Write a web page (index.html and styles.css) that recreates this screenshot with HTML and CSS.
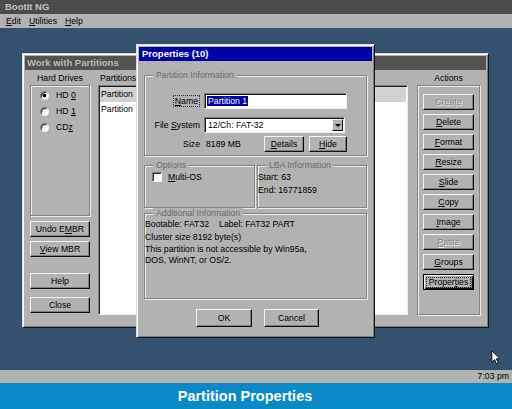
FILE: index.html
```html
<!DOCTYPE html>
<html lang="en">
<head>
    <meta charset="UTF-8">
    <title>BootIt NG - Partition Properties</title>
    <link rel="stylesheet" href="styles.css">
</head>
<body>
<div class="screen">
    <div class="app-title">BootIt NG</div>
    <div class="menubar">
        <span><u>E</u>dit</span>
        <span><u>U</u>tilities</span>
        <span><u>H</u>elp</span>
    </div>

    <div class="desktop">
        <!-- Main window -->
        <div class="win main-win">
            <div class="caption inactive">Work with Partitions</div>
            <div class="main-body">
                <div class="col col-drives">
                    <div class="col-head">Hard Drives</div>
                    <div class="etched drives-box">
                        <div class="radio checked"><span class="dot"></span><span>HD <u>0</u></span></div>
                        <div class="radio"><span class="dot"></span><span>HD <u>1</u></span></div>
                        <div class="radio"><span class="dot"></span><span>CD<u>z</u></span></div>
                    </div>
                    <div class="btn first">Undo E<u>M</u>BR</div>
                    <div class="btn"><u>V</u>iew MBR</div>
                    <div class="btn gap-big">Help</div>
                    <div class="btn gap-mid">Close</div>
                </div>
                <div class="col col-parts">
                    <div class="col-head left">Partitions</div>
                    <div class="listbox">
                        <div class="row sel">Partition</div>
                        <div class="row">Partition</div>
                    </div>
                </div>
                <div class="col col-actions">
                    <div class="col-head">Actions</div>
                    <div class="etched actions-box">
                        <div class="btn disabled">Crea<u>t</u>e</div>
                        <div class="btn"><u>D</u>elete</div>
                        <div class="btn"><u>F</u>ormat</div>
                        <div class="btn"><u>R</u>esize</div>
                        <div class="btn"><u>S</u>lide</div>
                        <div class="btn"><u>C</u>opy</div>
                        <div class="btn"><u>I</u>mage</div>
                        <div class="btn disabled"><u>P</u>aste</div>
                        <div class="btn"><u>G</u>roups</div>
                        <div class="btn focus"><span class="focus-rect">Proper<u>t</u>ies</span></div>
                    </div>
                </div>
            </div>
        </div>

        <!-- Properties dialog -->
        <div class="win dialog">
            <div class="caption active">Properties (10)</div>
            <div class="dlg-body">
                <fieldset class="group pi-group">
                    <legend>Partition Information</legend>
                    <div class="field-row name-row">
                        <span class="field-label"><span class="focus-label"><u>N</u>ame</span></span>
                        <div class="textbox name-box"><span class="selected-text">Partition 1</span></div>
                    </div>
                    <div class="field-row fs-row">
                        <span class="field-label">File <u>S</u>ystem</span>
                        <div class="textbox combo">
                            <span class="combo-text">12/Ch: FAT-32</span>
                            <span class="combo-arrow"></span>
                        </div>
                    </div>
                    <div class="field-row size-row">
                        <span class="field-label">Size</span>
                        <div class="size-field">
                            <span class="size-value">8189 MB</span>
                            <div class="btn details-btn"><u>D</u>etails</div>
                            <div class="btn hide-btn"><u>H</u>ide</div>
                        </div>
                    </div>
                </fieldset>

                <div class="group-pair">
                    <fieldset class="group options-group">
                        <legend>Options</legend>
                        <div class="check-row"><span class="checkbox"></span><span><u>M</u>ulti-OS</span></div>
                    </fieldset>
                    <fieldset class="group lba-group">
                        <legend>LBA Information</legend>
                        <div class="lba-line">Start: 63</div>
                        <div class="lba-line">End: 16771859</div>
                    </fieldset>
                </div>

                <fieldset class="group info-group">
                    <legend>Additional Information</legend>
                    <div class="info-line">Bootable: FAT32<span class="info-label">Label: FAT32 PART</span></div>
                    <div class="info-line cluster">Cluster size 8192 byte(s)</div>
                    <p class="info-note">This partition is not accessible by Win95a,<br>DOS, WinNT, or OS/2.</p>
                </fieldset>

                <div class="dlg-buttons">
                    <div class="btn ok-btn">OK</div>
                    <div class="btn cancel-btn">Cancel</div>
                </div>
            </div>
        </div>

        <svg class="cursor" width="10" height="15" viewBox="0 0 12 18">
            <path d="M1 1 L1 14.5 L4.3 11.4 L6.6 16.6 L8.6 15.7 L6.4 10.6 L10.8 10.6 Z" fill="#fff" stroke="#000" stroke-width="1" stroke-linejoin="miter"/>
        </svg>
    </div>

    <div class="statusbar">7:03 pm</div>
    <div class="banner">Partition Properties</div>
</div>
</body>
</html>
```

FILE: styles.css
```css
* {
    box-sizing: border-box;
}

body {
    margin: 0;
    font-family: "Liberation Sans", Arial, sans-serif;
    font-size: 8.7px;
    color: #000;
    background-color: #36516e;
}

u {
    text-decoration-thickness: 1px;
    text-underline-offset: 1px;
}

.screen {
    width: 512px;
    height: 409px;
    display: flex;
    flex-direction: column;
    overflow: hidden;
}

/* Top bars */
.app-title {
    height: 14px;
    line-height: 14px;
    padding-left: 5px;
    background-color: #4b4b4b;
    color: #c2c2c2;
    font-weight: bold;
    font-size: 9.5px;
}

.menubar {
    height: 14px;
    line-height: 14px;
    display: flex;
    padding-left: 2px;
    background-color: #b2b2b2;
}

.menubar span {
    padding: 0 4px;
}

/* Desktop */
.desktop {
    position: relative;
    height: 342px;
    background-color: #36516e;
}

.statusbar {
    height: 13px;
    line-height: 13px;
    padding-right: 3px;
    text-align: right;
    background-color: #b2b2b2;
}

.banner {
    flex: 1;
    line-height: 26px;
    padding-right: 22px;
    text-align: center;
    background-color: #0889c8;
    color: #fff;
    font-weight: bold;
    font-size: 14.5px;
}

/* Windows */
.win {
    position: absolute;
    display: flex;
    flex-direction: column;
    padding: 2px;
    background-color: #b2b2b2;
    border: 1px solid;
    border-color: #dcdcdc #141414 #141414 #dcdcdc;
    box-shadow: inset 1px 1px #fff, inset -1px -1px #7c7c7c;
}

.main-win {
    left: 22px;
    top: 25px;
    width: 467px;
    height: 275px;
}

.dialog {
    left: 136px;
    top: 16px;
    width: 239px;
    height: 294px;
}

.caption {
    height: 14px;
    line-height: 14px;
    padding-left: 2px;
    font-weight: bold;
    font-size: 9.5px;
}

.caption.inactive {
    background-color: #525252;
    color: #bababa;
}

.caption.active {
    padding-left: 3px;
    background-color: #0000a8;
    color: #fff;
}

/* Buttons */
.btn {
    height: 16px;
    line-height: 14px;
    text-align: center;
    white-space: nowrap;
    background-color: #b2b2b2;
    border: 1px solid;
    border-color: #f2f2f2 #101010 #101010 #f2f2f2;
    box-shadow: inset -1px -1px #7e7e7e;
}

.btn.disabled {
    color: #858585;
    text-shadow: 1px 1px #ececec;
}

.btn.focus {
    padding: 1px;
    border-color: #000;
    box-shadow: inset 1px 1px #f2f2f2, inset -1px -1px #101010, inset -2px -2px #7e7e7e;
}

.focus-rect {
    display: block;
    margin: 1px 1px 0;
    line-height: 9px;
    border: 1px dotted #222;
}

/* Etched frames */
.etched {
    border: 1px solid #858585;
    box-shadow: inset 1px 1px #ebebeb, 1px 1px #ebebeb;
}

/* Main window body */
.main-body {
    display: flex;
    padding: 1px 0 0 5px;
}

.col {
    display: flex;
    flex-direction: column;
}

.col-head {
    height: 14px;
    line-height: 14px;
    text-align: center;
}

.col-head.left {
    text-align: left;
    padding-left: 2px;
}

.col-drives {
    width: 60px;
}

.col-parts {
    width: 310px;
    margin-left: 8px;
}

.col-actions {
    width: 63px;
    margin-left: 9px;
}

.drives-box {
    height: 131px;
    padding: 1px 0 0 9px;
}

.radio {
    display: flex;
    align-items: center;
    height: 16px;
}

.dot {
    width: 9px;
    height: 9px;
    margin-right: 7px;
    border-radius: 50%;
    background-color: #fff;
    border: 1px solid;
    border-color: #7a7a7a #f2f2f2 #f2f2f2 #7a7a7a;
    box-shadow: inset 1px 1px #303030;
}

.radio.checked .dot {
    background: radial-gradient(circle, #000 0, #000 1.6px, #fff 2.2px);
}

.col-drives .btn.first {
    margin-top: 5px;
}

.col-drives .btn {
    margin-top: 4px;
}

.col-drives .btn.gap-big {
    margin-top: 16px;
}

.col-drives .btn.gap-mid {
    margin-top: 8px;
}

.listbox {
    height: 230px;
    padding: 1px;
    background-color: #fff;
    border: 1px solid;
    border-color: #7a7a7a #efefef #efefef #7a7a7a;
    box-shadow: inset 1px 1px #202020;
}

.listbox .row {
    height: 15px;
    line-height: 15px;
    padding-left: 1px;
}

.listbox .row.sel {
    background-color: #d2d2d2;
}

.actions-box {
    height: 230px;
    display: flex;
    flex-direction: column;
    gap: 4px;
    padding: 8px 0 0 5px;
}

.actions-box .btn {
    width: 51px;
}

/* Dialog body */
.dlg-body {
    display: flex;
    flex-direction: column;
    padding: 9px 5px 0;
}

fieldset.group {
    margin: 0;
    padding: 0;
    min-width: 0;
    border: 1px solid #858585;
    box-shadow: inset 1px 1px #ebebeb, 1px 1px #ebebeb;
}

fieldset.group legend {
    margin-left: 8px;
    padding: 0 3px;
    line-height: 11px;
    color: #6c6c6c;
    background-color: #b2b2b2;
}

.pi-group {
    height: 86px;
}

.field-row {
    display: flex;
    align-items: center;
    height: 16px;
}

.name-row {
    margin-top: 12px;
}

.fs-row {
    margin-top: 8px;
}

.size-row {
    margin-top: 3px;
}

.field-label {
    width: 55px;
    margin-right: 4px;
    text-align: right;
    white-space: nowrap;
}

.focus-label {
    padding: 0 1px;
    border: 1px dotted #333;
}

.textbox {
    height: 16px;
    line-height: 14px;
    padding-left: 2px;
    background-color: #fff;
    border: 1px solid;
    border-color: #7a7a7a #f2f2f2 #f2f2f2 #7a7a7a;
    box-shadow: inset 1px 1px #1a1a1a;
}

.name-box {
    width: 143px;
}

.selected-text {
    padding: 0 1px;
    background-color: #0000a8;
    color: #fff;
}

.combo {
    width: 141px;
    display: flex;
    align-items: center;
    justify-content: space-between;
    padding-right: 1px;
}

.combo-text {
    padding-left: 1px;
}

.combo-arrow {
    width: 11px;
    height: 12px;
    display: flex;
    align-items: center;
    justify-content: center;
    background-color: #b2b2b2;
    border: 1px solid;
    border-color: #f2f2f2 #101010 #101010 #f2f2f2;
}

.combo-arrow::after {
    content: "";
    border-left: 3px solid transparent;
    border-right: 3px solid transparent;
    border-top: 3px solid #000;
}

.size-field {
    width: 143px;
    display: flex;
    align-items: center;
}

.size-value {
    padding-left: 2px;
}

.details-btn {
    width: 40px;
    margin-left: auto;
}

.hide-btn {
    width: 38px;
    margin-left: 5px;
}

.group-pair {
    display: flex;
    gap: 2px;
    margin-top: 4px;
}

.options-group {
    width: 111px;
    height: 48px;
}

.lba-group {
    width: 110px;
    height: 48px;
    padding-left: 5px;
}

.check-row {
    display: flex;
    align-items: center;
    gap: 6px;
    margin-top: 1px;
    padding-left: 7px;
}

.checkbox {
    width: 10px;
    height: 10px;
    background-color: #fff;
    border: 1px solid;
    border-color: #7a7a7a #f2f2f2 #f2f2f2 #7a7a7a;
    box-shadow: inset 1px 1px #303030;
}

.lba-line {
    line-height: 13px;
}

.info-group {
    height: 91px;
    margin-top: 3px;
    padding-left: 7px;
}

.info-line {
    line-height: 11px;
}

.info-line.cluster {
    margin-top: 2px;
}

.info-label {
    margin-left: 10px;
}

.info-note {
    margin: 1px 0 0;
    line-height: 11px;
}

.dlg-buttons {
    display: flex;
    justify-content: center;
    gap: 12px;
    margin-top: 10px;
    padding-left: 4px;
}

.dlg-buttons .btn {
    height: 18px;
    line-height: 16px;
}

.ok-btn {
    width: 56px;
}

.cancel-btn {
    width: 55px;
}

.cursor {
    position: absolute;
    left: 491px;
    top: 322px;
}
```
